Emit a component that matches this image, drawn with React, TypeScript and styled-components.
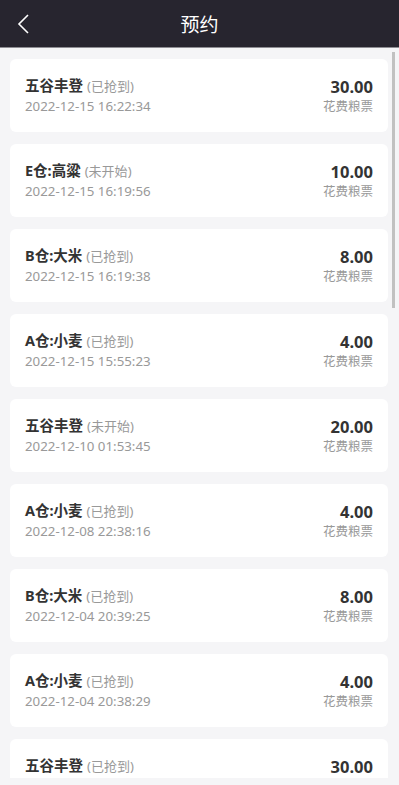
import styled, { createGlobalStyle } from 'styled-components'

const GlobalStyle = createGlobalStyle`
  * {
    box-sizing: border-box;
  }
  html, body {
    margin: 0;
    padding: 0;
    height: 100%;
    overflow: hidden;
  }
  body {
    font-family: "Noto Sans", "Noto Sans CJK SC", sans-serif;
    background: #f5f5f7;
  }
`

const Page = styled.div`
  position: relative;
  height: 100vh;
  display: flex;
  flex-direction: column;
  background: #f5f5f7;
  overflow: hidden;
`

const Header = styled.header`
  flex: none;
  height: 48px;
  display: grid;
  grid-template-columns: 46px 1fr 46px;
  align-items: center;
  background: #27252f;
  border-bottom: 1px solid #8e8d93;
`

const Back = styled.button`
  display: flex;
  align-items: center;
  justify-content: center;
  height: 46px;
  padding: 0;
  background: none;
  border: none;
`

const Title = styled.h1`
  margin: 0;
  text-align: center;
  color: #fff;
  font-size: 19px;
  font-weight: 400;
  font-family: "Noto Sans CJK SC", sans-serif;
`

const Scroller = styled.main`
  flex: 1;
  min-height: 0;
  margin-bottom: 7px;
  overflow: hidden;
`

const List = styled.div`
  display: flex;
  flex-direction: column;
  gap: 12px;
  padding: 11px 11px 0 10px;
`

const Card = styled.div`
  flex: none;
  height: 73px;
  display: flex;
  align-items: center;
  justify-content: space-between;
  padding: 0 15px;
  background: #fff;
  border-radius: 6px;
`

const Info = styled.div`
  display: flex;
  flex-direction: column;
`

const Name = styled.div`
  color: #333;
  font-size: 14.5px;
  font-weight: 700;
  line-height: 20px;
`

const Status = styled.span`
  margin-left: 4px;
  color: #999;
  font-size: 13px;
  font-weight: 400;
`

const Time = styled.div`
  color: #999;
  font-size: 13.3px;
  line-height: 20px;
`

const Cost = styled.div`
  display: flex;
  flex-direction: column;
  align-items: flex-end;
  gap: 1px;
`

const Amount = styled.div`
  color: #333;
  font-size: 16.5px;
  font-weight: 700;
  line-height: 21px;
`

const Unit = styled.div`
  color: #999;
  font-size: 12.5px;
  line-height: 18px;
`

const ScrollThumb = styled.div`
  position: absolute;
  top: 52px;
  right: 4px;
  width: 3px;
  height: 256px;
  background: #c1c1c1;
`

const records = [
  ['五谷丰登', '已抢到', '2022-12-15 16:22:34', '30.00'],
  ['E仓:高粱', '未开始', '2022-12-15 16:19:56', '10.00'],
  ['B仓:大米', '已抢到', '2022-12-15 16:19:38', '8.00'],
  ['A仓:小麦', '已抢到', '2022-12-15 15:55:23', '4.00'],
  ['五谷丰登', '未开始', '2022-12-10 01:53:45', '20.00'],
  ['A仓:小麦', '已抢到', '2022-12-08 22:38:16', '4.00'],
  ['B仓:大米', '已抢到', '2022-12-04 20:39:25', '8.00'],
  ['A仓:小麦', '已抢到', '2022-12-04 20:38:29', '4.00'],
  ['五谷丰登', '已抢到', '2022-12-04 20:30:11', '30.00'],
]

const App = () => {
  return (
    <Page>
      <GlobalStyle />
      <Header>
        <Back aria-label="返回">
          <svg width="14" height="22" viewBox="0 0 14 22">
            <path d="M12 2 L3 11 L12 20" fill="none" stroke="#fff" strokeWidth="1.6" />
          </svg>
        </Back>
        <Title>预约</Title>
        <span />
      </Header>
      <Scroller>
        <List>
          {records.map((item, i) => (
            <Card key={i}>
              <Info>
                <Name>
                  {item[0]}
                  <Status>({item[1]})</Status>
                </Name>
                <Time>{item[2]}</Time>
              </Info>
              <Cost>
                <Amount>{item[3]}</Amount>
                <Unit>花费粮票</Unit>
              </Cost>
            </Card>
          ))}
        </List>
      </Scroller>
      <ScrollThumb />
    </Page>
  )
}

export default App
